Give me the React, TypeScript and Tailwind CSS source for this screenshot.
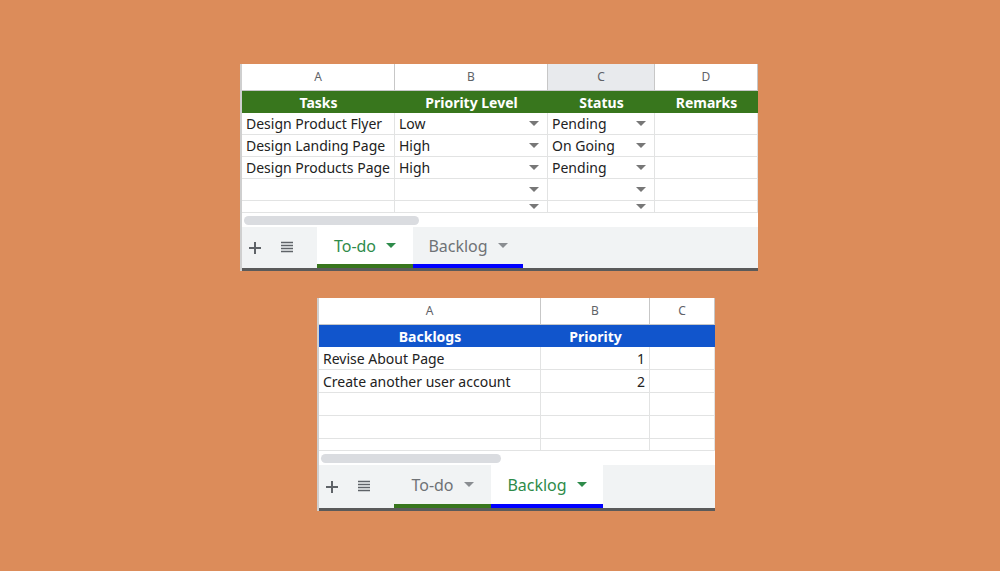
import React from "react";

const Caret = ({ c = "#5f6368" }: { c?: string }) => (
  <svg width="10" height="6" viewBox="0 0 10 6"><path d="M0 0h10L5 5z" fill={c} /></svg>
);
const Plus = () => (
  <svg width="14" height="14" viewBox="0 0 14 14"><path d="M7 1v12M1 7h12" stroke="#5f6368" strokeWidth="2" /></svg>
);
const List = () => (
  <svg width="14" height="13" viewBox="0 0 14 13"><path d="M1 1.5h12M1 4.5h12M1 7.5h12M1 10.5h12" stroke="#5f6368" strokeWidth="1.6" /></svg>
);

function Tabs({ active, tabW, h }: { active: number; tabW: number[]; h: string }) {
  const names = ["To-do", "Backlog"];
  return (
    <div className={`flex bg-[#f1f3f4] border-b-[3px] border-[#5a5a5a] ${h}`}>
      <div className="flex items-center gap-[18px] pl-[6px] w-[75px]">
        <Plus /><List />
      </div>
      {names.map((n, i) => (
        <div key={n} className={`flex flex-col ${i === active ? "bg-white" : ""}`} style={{ width: tabW[i] }}>
          <div className={`flex-1 flex items-center justify-center gap-[10px] text-[16px] ${i === active ? "text-[#2e8b4a]" : "text-[#6f7276]"}`}>
            {n}<Caret c={i === active ? "#2e8b4a" : "#8a8d91"} />
          </div>
          <div className={`h-[4px] ${i === 0 ? "bg-[#38761d]" : "bg-[#0000ff]"}`} />
        </div>
      ))}
    </div>
  );
}

function Sheet({ cols, letters, headBg, head, rows, rowH, visRows, partial, activeCol, aligns, carets, active, tabW, tabH, thumb }: any) {
  return (
    <div className="bg-white border-l-2 border-[#cfcfcf] overflow-hidden font-['Liberation_Sans',Arial,sans-serif]">
      <div className="flex h-[27px]">
        {cols.map((w: number, i: number) => (
          <div key={i} className={`border-r border-b border-[#c7c7c7] flex items-center justify-center text-[12px] text-[#5f6368] ${i === activeCol ? "bg-[#e8eaed]" : "bg-white"}`} style={{ width: w }}>{letters[i]}</div>
        ))}
      </div>
      <div className={`flex h-[22px] ${headBg}`}>
        {cols.map((w: number, i: number) => (
          <div key={i} className="flex items-center justify-center text-[14px] font-bold text-white" style={{ width: w }}>{head[i]}</div>
        ))}
      </div>
      {Array.from({ length: visRows }).map((_, r) => (
        <div key={r} className="flex" style={{ height: r === visRows - 1 ? partial : rowH }}>
          {cols.map((w: number, i: number) => (
            <div key={i} className={`border-r border-b border-[#e2e3e3] flex items-center px-[4px] text-[14px] text-[#222] ${aligns[i] === "r" ? "justify-end" : "justify-between"}`} style={{ width: w }}>
              <span>{rows[r]?.[i] ?? ""}</span>
              {carets[i] && <span className="mr-[4px]"><Caret c="#777" /></span>}
            </div>
          ))}
        </div>
      ))}
      <div className="h-[14px] bg-white flex items-center pl-[2px]">
        <div className={`h-[9px] rounded-full bg-[#dadce0] ${thumb}`} />
      </div>
      <Tabs active={active} tabW={tabW} h={tabH} />
    </div>
  );
}

export default function App() {
  return (
    <div className="w-[1000px] h-[571px] bg-[#dc8c5a] flex flex-col pt-[64px] gap-[27px]">
      <div className="ml-[240px] w-[518px]">
        <Sheet
          cols={[153, 153, 107, 103]}
          letters={["A", "B", "C", "D"]}
          headBg="bg-[#38761d]"
          head={["Tasks", "Priority Level", "Status", "Remarks"]}
          rows={[["Design Product Flyer", "Low", "Pending", ""], ["Design Landing Page", "High", "On Going", ""], ["Design Products Page", "High", "Pending", ""]]}
          rowH={22} visRows={5} partial={12} activeCol={2}
          aligns={["l", "l", "l", "l"]} carets={[false, true, true, false]}
          active={0} tabW={[96, 110]} tabH="h-[44px]" thumb="w-[175px]"
        />
      </div>
      <div className="ml-[317px] w-[398px]">
        <Sheet
          cols={[222, 109, 65]}
          letters={["A", "B", "C"]}
          headBg="bg-[#1155cc]"
          head={["Backlogs", "Priority", ""]}
          rows={[["Revise About Page", "1", ""], ["Create another user account", "2", ""]]}
          rowH={23} visRows={5} partial={12} activeCol={-1}
          aligns={["l", "r", "l"]} carets={[false, false, false]}
          active={1} tabW={[97, 112]} tabH="h-[46px]" thumb="w-[180px]"
        />
      </div>
    </div>
  );
}
